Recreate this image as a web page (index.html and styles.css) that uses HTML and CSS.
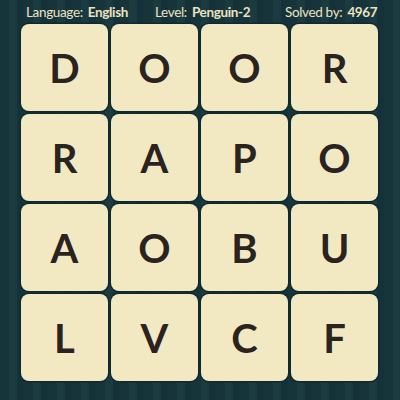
FILE: index.html
```html
<!DOCTYPE html>
<html>
<head>
<meta charset="utf-8">
<link rel="stylesheet" href="styles.css">
</head>
<body>
<div class="page">
  <div class="header">
    <span class="item">Language: <b>English</b></span>
    <span class="item">Level: <b>Penguin-2</b></span>
    <span class="item">Solved by: <b>4967</b></span>
  </div>
  <div class="grid">
    <div class="tile">D</div>
    <div class="tile">O</div>
    <div class="tile">O</div>
    <div class="tile">R</div>
    <div class="tile">R</div>
    <div class="tile">A</div>
    <div class="tile">P</div>
    <div class="tile">O</div>
    <div class="tile">A</div>
    <div class="tile">O</div>
    <div class="tile">B</div>
    <div class="tile">U</div>
    <div class="tile">L</div>
    <div class="tile">V</div>
    <div class="tile">C</div>
    <div class="tile">F</div>
  </div>
</div>
</body>
</html>
```
FILE: styles.css
```css
html, body {
  margin: 0;
  padding: 0;
}
body {
  width: 400px;
  height: 400px;
  overflow: hidden;
  background: repeating-linear-gradient(90deg, #16343a 0px, #16343a 9px, #1b3b41 9px, #1b3b41 17px, #15313a 17px, #15313a 24px);
  font-family: Lato, "Open Sans", sans-serif;
}
.page {
  width: 400px;
  height: 400px;
  display: flex;
  flex-direction: column;
}
.header {
  height: 23px;
  display: grid;
  grid-template-columns: 129px 130px auto;
  align-items: center;
  padding: 0 0 0 26px;
  color: #ece3c0;
  font-size: 13.5px;
  letter-spacing: -0.35px;
  padding-top: 1px;
  box-sizing: border-box;
}
.header b {
  font-weight: 700;
  margin-left: 2px;
}
.grid {
  margin: 1px 0 0 21px;
  display: grid;
  grid-template-columns: repeat(4, 87px);
  grid-template-rows: repeat(4, 87px);
  gap: 3px;
}
.tile {
  background: #f2e9c3;
  border-radius: 8px;
  box-shadow: 0 0 0 1.5px #0e2a30;
  display: flex;
  align-items: center;
  justify-content: center;
  font-size: 40px;
  font-weight: 700;
  color: #2a231e;
  text-shadow: 0 0 1px #fff8dc;
}
```
